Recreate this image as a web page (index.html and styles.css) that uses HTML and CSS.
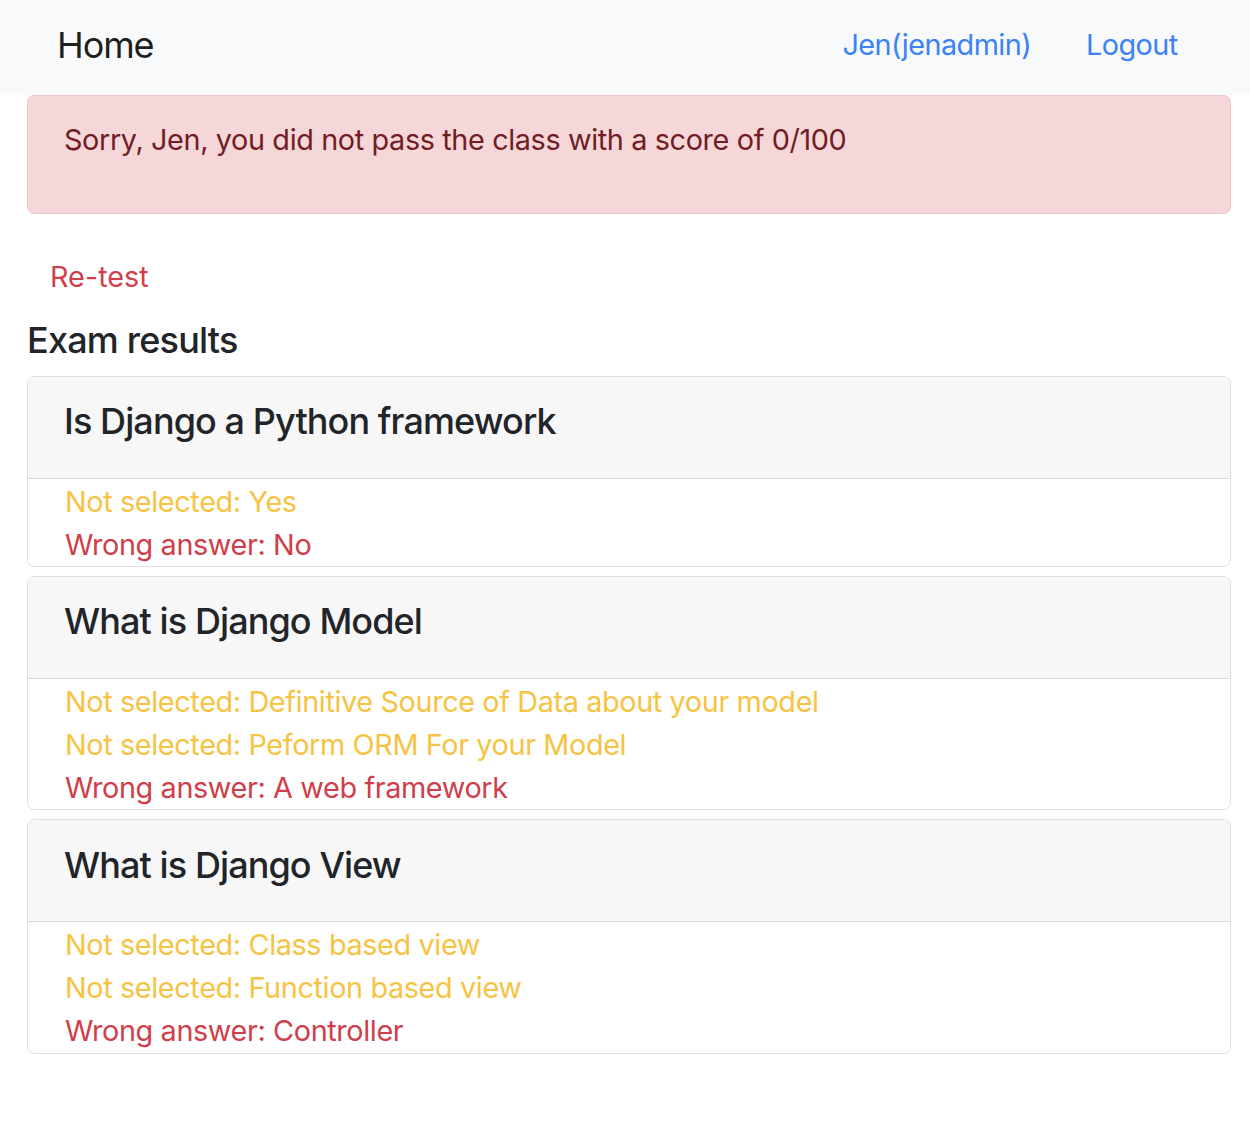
FILE: index.html
```html
<!DOCTYPE html>
<html lang="en">
<head>
<meta charset="utf-8">
<title>Exam results</title>
<link rel="stylesheet" href="styles.css">
</head>
<body>
<nav class="navbar">
  <a class="brand" href="#">Home</a>
  <div class="nav-links">
    <a class="nav-link" href="#">Jen(jenadmin)</a>
    <a class="nav-link" href="#">Logout</a>
  </div>
</nav>
<main class="content">
  <div class="alert">
    <p>Sorry, Jen, you did not pass the class with a score of 0/100</p>
  </div>
  <button class="btn-retest" type="button">Re-test</button>
  <h5 class="results-title">Exam results</h5>
  <div class="cards">
    <div class="card">
      <div class="card-header"><h5>Is Django a Python framework</h5></div>
      <div class="card-body">
        <div class="answer warn">Not selected: Yes</div>
        <div class="answer danger">Wrong answer: No</div>
      </div>
    </div>
    <div class="card">
      <div class="card-header"><h5>What is Django Model</h5></div>
      <div class="card-body">
        <div class="answer warn">Not selected: Definitive Source of Data about your model</div>
        <div class="answer warn">Not selected: Peform ORM For your Model</div>
        <div class="answer danger">Wrong answer: A web framework</div>
      </div>
    </div>
    <div class="card">
      <div class="card-header"><h5>What is Django View</h5></div>
      <div class="card-body">
        <div class="answer warn">Not selected: Class based view</div>
        <div class="answer warn">Not selected: Function based view</div>
        <div class="answer danger">Wrong answer: Controller</div>
      </div>
    </div>
  </div>
</main>
</body>
</html>
```
FILE: styles.css
```css
* { box-sizing: border-box; }
html, body {
  margin: 0;
  padding: 0;
  background: #fff;
}
body {
  font-family: Inter, "Noto Sans", "Liberation Sans", sans-serif;
  font-size: 28.8px;
  line-height: 1.5;
  letter-spacing: -0.37px;
  color: #212529;
}
a { text-decoration: none; }

.navbar {
  display: flex;
  align-items: center;
  justify-content: space-between;
  height: 95px;
  padding: 0 58px 5px 57px;
  background: #f8f9fa;
}
.brand {
  font-size: 36px;
  line-height: 1.5;
  letter-spacing: -1.1px;
  color: rgba(0, 0, 0, 0.9);
}
.nav-links {
  display: flex;
  gap: 26px;
}
.nav-link {
  color: #3b82f6;
  padding: 0 14.4px;
  letter-spacing: -0.55px;
}

.content {
  margin: 0 19px 0 27px;
}
.alert {
  background: #f5d7da;
  border: 1px solid #f1c6cb;
  color: #721c24;
  border-radius: 7.2px;
  padding: 22px 36px 23px;
  margin-bottom: 28.8px;
}
.alert p {
  margin: 0 0 29px 0;
}
.btn-retest {
  display: block;
  font: inherit;
  color: #d13f4b;
  background: transparent;
  border: 1px solid transparent;
  padding: 11px 22px;
  cursor: pointer;
}
.results-title {
  font-size: 36px;
  font-weight: 500;
  line-height: 1.2;
  letter-spacing: -0.8px;
  margin: 9px 0 13.4px 0;
}
.cards {
  display: flex;
  flex-direction: column;
  gap: 9px;
}
.card {
  border: 1px solid rgba(0, 0, 0, 0.125);
  border-radius: 7.2px;
  overflow: hidden;
}
.card-header {
  background: #f7f7f7;
  border-bottom: 1px solid rgba(0, 0, 0, 0.125);
  padding: 21.6px 36px;
}
.card-header h5 {
  font-size: 36px;
  font-weight: 500;
  line-height: 1.2;
  letter-spacing: -0.9px;
  margin: 0 0 12.4px 0;
  padding-top: 2px;
}
.card-body {
  padding-top: 1px;
}
.answer {
  padding: 0 37px;
}
.warn { color: #f6c343; }
.danger { color: #cf3e4a; }
```
